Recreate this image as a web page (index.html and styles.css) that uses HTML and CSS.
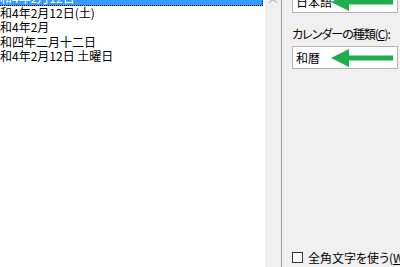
FILE: index.html
```html
<!DOCTYPE html>
<html lang="ja">
<head>
    <meta charset="UTF-8">
    <title>日付と時刻</title>
    <link rel="stylesheet" href="styles.css">
</head>
<body>
    <div class="window">
        <div class="list">
            <div class="row selected">令和4年2月12日</div>
            <div class="row">令和4年2月12日(土)</div>
            <div class="row">令和4年2月</div>
            <div class="row">令和四年二月十二日</div>
            <div class="row">令和4年2月12日 土曜日</div>
        </div>
        <div class="scrollbar">
            <svg class="scroll-arrow" width="10" height="6" viewBox="0 0 10 6">
                <path d="M1 5 L5 1 L9 5" fill="none" stroke="#c4c4c4" stroke-width="1.5"/>
            </svg>
        </div>
        <div class="panel">
            <div class="field first">
                日本語
                <svg class="arrow" width="62" height="18" viewBox="0 0 62 18">
                    <path d="M0 9 L18 0 L18 6.5 L62 6.5 L62 11.5 L18 11.5 L18 18 Z" fill="#1fae4b"/>
                </svg>
            </div>
            <div class="caption">カレンダーの種類(<u>C</u>):</div>
            <div class="field">
                和暦
                <svg class="arrow" width="62" height="18" viewBox="0 0 62 18">
                    <path d="M0 9 L18 0 L18 6.5 L62 6.5 L62 11.5 L18 11.5 L18 18 Z" fill="#1fae4b"/>
                </svg>
            </div>
            <div class="check">
                <span class="box"></span>
                <span>全角文字を使う(<u>W</u>)</span>
            </div>
        </div>
    </div>
</body>
</html>
```

FILE: styles.css
```css
html, body {
    margin: 0;
    padding: 0;
}
body {
    font-family: "Noto Sans CJK JP", "Noto Sans", sans-serif;
    font-size: 12px;
    font-feature-settings: "palt";
    color: #000;
    background: #f0f0f0;
    overflow: hidden;
}
.window {
    display: flex;
    width: 400px;
    height: 267px;
    overflow: hidden;
}
.list {
    width: 265px;
    flex-shrink: 0;
    background: #fff;
    margin-top: -9px;
    overflow: hidden;
}
.row {
    height: 14.6px;
    line-height: 14.6px;
    text-indent: -12px;
    white-space: nowrap;
}
.row.selected {
    width: 263px;
    background: #3399ff;
    color: #fff;
    box-sizing: border-box;
    border-right: 1px dotted #000;
    border-bottom: 1px dotted #000;
}
.scrollbar {
    position: relative;
    width: 16px;
    flex-shrink: 0;
    border-right: 1px solid #a0a0a0;
}
.scroll-arrow {
    position: absolute;
    left: 3px;
    top: -2px;
}
.panel {
    flex: 1;
    display: flex;
    flex-direction: column;
    padding-left: 10px;
}
.field {
    position: relative;
    width: 106px;
    height: 23px;
    box-sizing: border-box;
    border: 1px solid #b4b4b4;
    background: #fff;
    padding-left: 3px;
    line-height: 21px;
}
.field.first {
    margin-top: -10px;
}
.arrow {
    position: absolute;
    left: 38px;
    top: 2px;
}
.caption {
    margin-top: 13px;
    line-height: 15px;
    margin-bottom: 5px;
    letter-spacing: -1px;
    white-space: nowrap;
}
.check {
    margin-top: auto;
    margin-bottom: 2px;
    display: flex;
    align-items: center;
    gap: 5px;
    white-space: nowrap;
    line-height: 15px;
}
.box {
    width: 11px;
    height: 11px;
    box-sizing: border-box;
    border: 1px solid #333;
    background: #fff;
    flex-shrink: 0;
}
```
